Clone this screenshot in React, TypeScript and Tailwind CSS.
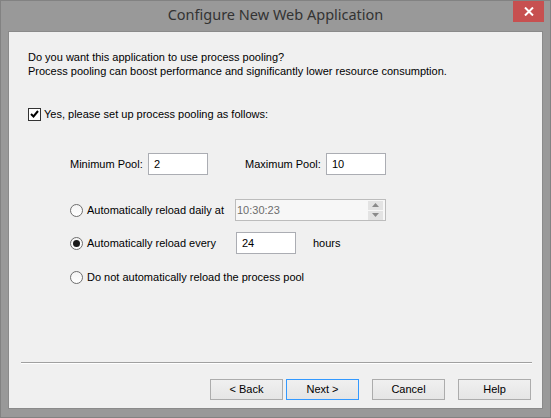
import React from 'react';

const ui = { fontFamily: '"Liberation Sans", Arial, sans-serif' };

const TextBox: React.FC<{ value: string; className?: string }> = ({ value, className = '' }) => (
  <div className={`h-[22px] w-[60px] border border-[#abadb3] bg-white pl-[5px] flex items-center text-[11px] text-black ${className}`}>
    {value}
  </div>
);

const Radio: React.FC<{ checked?: boolean }> = ({ checked }) => (
  <span className="w-[13px] h-[13px] rounded-full border border-[#6e6e6e] bg-gradient-to-b from-[#f4f4f4] to-[#ffffff] flex items-center justify-center shrink-0">
    {checked && <span className="w-[7px] h-[7px] rounded-full bg-[#1a1a1a]" />}
  </span>
);

const Button: React.FC<{ label: string; focused?: boolean }> = ({ label, focused }) => (
  <div
    className={`w-[73px] h-[21px] flex items-center justify-center text-[11px] text-black bg-gradient-to-b from-[#f0f0f0] to-[#e5e5e5] border ${
      focused ? 'border-[#3399ff]' : 'border-[#acacac]'
    }`}
  >
    {label}
  </div>
);

export default function App() {
  return (
    <div className="w-[551px] h-[418px] bg-[#999999] border border-[#828282] flex flex-col" style={ui}>
      {/* title bar */}
      <div className="h-[30px] relative flex items-center justify-center shrink-0">
        <span className="text-[14.5px] text-[#333333] pb-[2px]" style={{ fontFamily: '"Noto Sans", "Open Sans", sans-serif' }}>
          Configure New Web Application
        </span>
        <div className="absolute right-[6px] top-0 w-[31px] h-[21px] bg-[#c75050] flex items-center justify-center">
          <svg width="10" height="9" viewBox="0 0 10 9">
            <path d="M1 0.5 L9 8.5 M9 0.5 L1 8.5" stroke="#ffffff" strokeWidth="2" />
          </svg>
        </div>
      </div>

      {/* client area */}
      <div className="flex-1 mx-[7px] mb-[8px] bg-[#f0f0f0] border border-[#8a8a8a] flex flex-col text-[11px] text-black">
        <div className="pl-[19px] pt-[18px] leading-[14px]">
          <p>Do you want this application to use process pooling?</p>
          <p>Process pooling can boost performance and significantly lower resource consumption.</p>
        </div>

        <div className="pl-[19px] mt-[29px] h-[14px] flex items-center gap-[3px]">
          <span className="w-[13px] h-[13px] border border-[#333333] bg-white flex items-center justify-center">
            <svg width="9" height="8" viewBox="0 0 9 8">
              <path d="M1 4 L3.5 6.5 L8 1" stroke="#000000" strokeWidth="2" fill="none" />
            </svg>
          </span>
          <span>Yes, please set up process pooling as follows:</span>
        </div>

        <div className="pl-[61px] mt-[32px] flex items-center">
          <span className="w-[78px]">Minimum Pool:</span>
          <TextBox value="2" />
          <span className="ml-[37px] w-[81px]">Maximum Pool:</span>
          <TextBox value="10" />
        </div>

        <div className="pl-[61px] mt-[24px] flex items-center">
          <div className="w-[165px] flex items-center gap-[4px]">
            <Radio />
            <span>Automatically reload daily at</span>
          </div>
          <div className="h-[22px] w-[151px] border border-[#bcbcbc] bg-[#f7f7f7] flex items-center justify-between pl-[1px] pr-[2px]">
            <span className="text-[#6d6d6d]">10:30:23</span>
            <div className="flex flex-col gap-[1px]">
              <div className="w-[15px] h-[9px] bg-[#e3e3e3] flex items-center justify-center">
                <svg width="7" height="4" viewBox="0 0 7 4"><path d="M0 4 L3.5 0 L7 4 Z" fill="#8a8a8a" /></svg>
              </div>
              <div className="w-[15px] h-[9px] bg-[#e3e3e3] flex items-center justify-center">
                <svg width="7" height="4" viewBox="0 0 7 4"><path d="M0 0 L3.5 4 L7 0 Z" fill="#8a8a8a" /></svg>
              </div>
            </div>
          </div>
        </div>

        <div className="pl-[61px] mt-[11px] flex items-center">
          <div className="w-[166px] flex items-center gap-[4px]">
            <Radio checked />
            <span>Automatically reload every</span>
          </div>
          <TextBox value="24" />
          <span className="ml-[17px]">hours</span>
        </div>

        <div className="pl-[61px] mt-[12px] h-[22px] flex items-center gap-[4px]">
          <Radio />
          <span>Do not automatically reload the process pool</span>
        </div>

        <div className="mt-auto ml-[12px] mr-[10px] border-t border-[#a0a0a0] border-b border-b-white" />

        <div className="flex justify-end pr-[11px] mt-[15px] mb-[8px]">
          <Button label="< Back" />
          <div className="ml-[3px]"><Button label="Next >" focused /></div>
          <div className="ml-[13px]"><Button label="Cancel" /></div>
          <div className="ml-[13px]"><Button label="Help" /></div>
        </div>
      </div>
    </div>
  );
}
